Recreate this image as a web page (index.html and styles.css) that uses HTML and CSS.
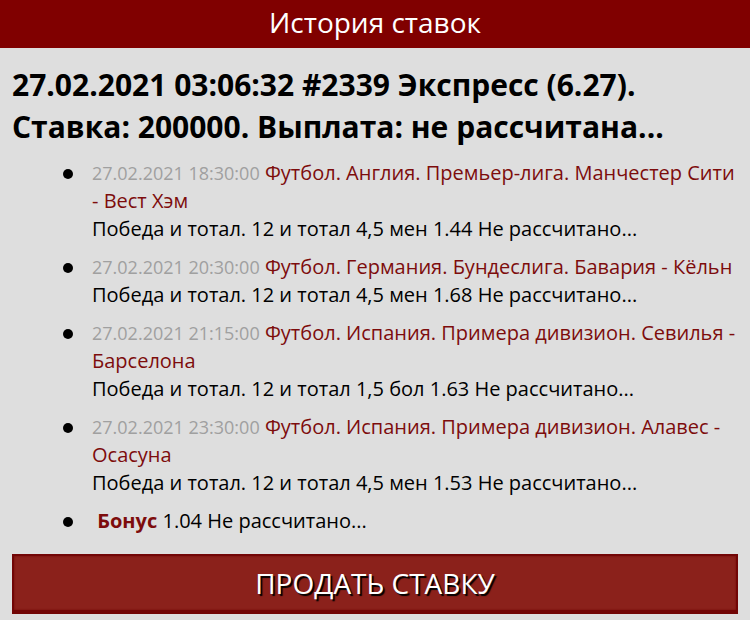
FILE: index.html
```
<!DOCTYPE html>
<html lang="ru">
<head>
<meta charset="utf-8">
<meta name="viewport" content="width=device-width, initial-scale=1">
<title>История ставок</title>
<link rel="stylesheet" href="styles.css">
</head>
<body>
<header class="topbar"><h1 class="topbar-title">История ставок</h1></header>
<main class="content">
<h2 class="bet-title">27.02.2021 03:06:32 #2339 Экспресс (6.27). Ставка: 200000. Выплата: не рассчитана...</h2>
<ul class="events">
<li class="event"><div><time class="date">27.02.2021 18:30:00</time> <span class="match">Футбол. Англия. Премьер-лига. Манчестер Сити - Вест Хэм</span><br>Победа и тотал. 12 и тотал 4,5 мен 1.44 Не рассчитано...</div></li>
<li class="event"><div><time class="date">27.02.2021 20:30:00</time> <span class="match">Футбол. Германия. Бундеслига. Бавария - Кёльн</span><br>Победа и тотал. 12 и тотал 4,5 мен 1.68 Не рассчитано...</div></li>
<li class="event"><div><time class="date">27.02.2021 21:15:00</time> <span class="match">Футбол. Испания. Примера дивизион. Севилья - Барселона</span><br>Победа и тотал. 12 и тотал 1,5 бол 1.63 Не рассчитано...</div></li>
<li class="event"><div><time class="date">27.02.2021 23:30:00</time> <span class="match">Футбол. Испания. Примера дивизион. Алавес - Осасуна</span><br>Победа и тотал. 12 и тотал 4,5 мен 1.53 Не рассчитано...</div></li>
<li class="event"><div>&nbsp;<strong class="match">Бонус</strong> 1.04 Не рассчитано...</div></li>
</ul>
<button class="sell" type="button">ПРОДАТЬ СТАВКУ</button>
</main>
</body>
</html>
```
FILE: styles.css
```
* {
  box-sizing: border-box;
}

body {
  margin: 0;
  background: #dedede;
  color: #000;
  font-family: "Open Sans", "Noto Sans", sans-serif;
  font-size: 20px;
  line-height: 28px;
}

.topbar {
  background: #800000;
  color: #fff;
  padding: 2px 12px 6px;
  text-align: center;
}

.topbar-title {
  margin: 0;
  font-size: 28px;
  font-weight: 400;
  line-height: 40px;
}

.content {
  padding: 16px 12px 6px;
}

.bet-title {
  margin: 0;
  font-size: 30px;
  font-weight: 700;
  line-height: 42px;
}

.events {
  margin: 11px 0 19px;
  padding: 0 0 0 51px;
  list-style: none;
}

.event {
  display: grid;
  grid-template-columns: 10px 1fr;
  column-gap: 19px;
}

.event::before {
  content: "";
  width: 10px;
  height: 10px;
  margin-top: 10px;
  border-radius: 50%;
  background: #000;
}

.event + .event {
  margin-top: 10px;
}

.date {
  color: #a0a0a0;
  font-size: 18px;
}

.match {
  color: #7d0c0c;
}

.sell {
  display: block;
  width: 100%;
  padding: 8px;
  border: 2px solid #720606;
  border-bottom-width: 4px;
  background: #8b211b;
  box-shadow: inset 0 0 2px #720606;
  color: #fff;
  font: inherit;
  font-size: 28px;
  line-height: 38px;
  text-shadow: 2px 2px 1px #000;
}
```
